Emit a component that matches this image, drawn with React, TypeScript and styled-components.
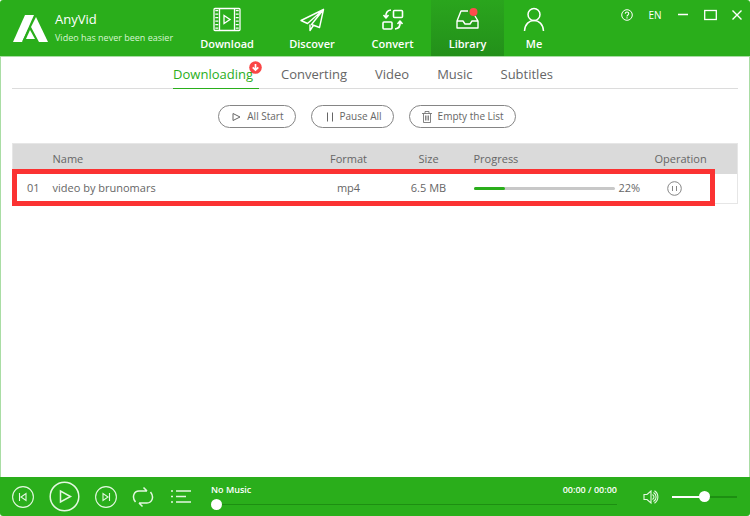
import React, { useState } from "react";
import styled, { createGlobalStyle, css } from "styled-components";

const GREEN = "#2aae1b";

const GlobalStyle = createGlobalStyle`
  *, *::before, *::after { box-sizing: border-box; }
  body { margin: 0; background: #fff; font-family: "Open Sans", "Noto Sans", sans-serif; color: #666; }
  button, input { font: inherit; color: inherit; }
  button { padding: 0; border: 0; background: none; cursor: pointer; }
  svg { display: block; flex: none; fill: none; stroke: currentColor; }
`;

const Window = styled.div`
  display: flex;
  flex-direction: column;
  min-height: 100vh;
  background: #fff;
  border-radius: 3px;
  overflow: hidden;
`;

const Header = styled.header`
  display: flex;
  height: 56px;
  background: ${GREEN};
  color: #fff;
`;

const Brand = styled.div`
  display: flex;
  align-items: flex-start;
  gap: 7px;
  width: 184px;
  padding: 9px 0 0 13px;
  white-space: nowrap;
`;

const BrandLogo = styled.svg`
  margin-top: 6px;
`;

const BrandName = styled.div`
  font-size: 13px;
  line-height: 20px;
`;

const Tagline = styled.div`
  font-size: 9px;
  line-height: 18px;
  color: #d8f5d4;
`;

const Nav = styled.nav`
  display: flex;
`;

const NavItem = styled.button<{ $width: number; $active?: boolean }>`
  display: flex;
  flex-direction: column;
  align-items: center;
  gap: 2px;
  width: ${(p) => p.$width}px;
  padding-top: 6px;
  font-size: 11px;
  font-weight: 600;
  line-height: 16px;
  ${(p) =>
    p.$active &&
    css`
      background: linear-gradient(#2aa51d, #23901a);
    `}
`;

const WindowTools = styled.div`
  display: flex;
  align-items: center;
  height: 30px;
  margin-left: auto;
  font-size: 10px;
`;

const ToolButton = styled.button<{ $width: number }>`
  display: flex;
  align-items: center;
  justify-content: center;
  width: ${(p) => p.$width}px;
  height: 30px;
`;

const Content = styled.main`
  flex: 1;
  padding: 0 11px;
  border: solid #a9dda4;
  border-width: 1px 1px 0;
`;

const Tabs = styled.nav`
  display: flex;
  justify-content: center;
  gap: 28px;
  height: 32px;
  padding-right: 24px;
  border-bottom: 1px solid #dcdcdc;
`;

const Tab = styled.button<{ $active?: boolean }>`
  position: relative;
  height: 32px;
  padding-top: 2px;
  font-size: 13px;
  line-height: 30px;
  ${(p) =>
    p.$active &&
    css`
      margin-right: -6px;
      padding-right: 6px;
      color: ${GREEN};
      box-shadow: inset 0 -1px ${GREEN};
    `}
`;

const TabBadge = styled.svg`
  position: absolute;
  top: 4px;
  right: -3px;
`;

const Actions = styled.div`
  display: flex;
  justify-content: center;
  gap: 15px;
  padding: 16px 16px 15px 0;
`;

const ActionButton = styled.button`
  display: flex;
  align-items: center;
  gap: 5px;
  height: 23px;
  padding: 0 11px;
  border: 1px solid #858585;
  border-radius: 12px;
  font-size: 10px;
  line-height: 21px;
`;

const ListArea = styled.div`
  position: relative;
`;

const Highlight = styled.div`
  position: absolute;
  top: 26px;
  bottom: -2px;
  left: 0;
  right: 23px;
  border: 5px solid #fb3232;
  pointer-events: none;
`;

const Table = styled.table`
  width: 100%;
  table-layout: fixed;
  border-collapse: collapse;
  font-size: 11px;
  border: 1px solid #e6e6e6;
`;

const Col = styled.col<{ $width?: number }>`
  width: ${(p) => (p.$width ? `${p.$width}px` : "auto")};
`;

const cell = css<{ $center?: boolean; $pad?: number }>`
  height: 30px;
  padding: 0 0 0 ${(p) => p.$pad ?? 0}px;
  text-align: ${(p) => (p.$center ? "center" : "left")};
  font-weight: 400;
  line-height: 16px;
  white-space: nowrap;
`;

const HeadCell = styled.th`
  ${cell}
  background: #dadada;
`;

const Cell = styled.td`
  ${cell}
`;

const RowButton = styled.button`
  display: block;
  color: #858585;
`;

const ProgressRow = styled.div`
  display: flex;
  align-items: center;
  gap: 4px;
`;

const ProgressTrack = styled.div`
  width: 141px;
  height: 3px;
  border-radius: 2px;
  background: #c8c8c8;
`;

const ProgressFill = styled.div`
  height: 3px;
  border-radius: 2px;
  background: ${GREEN};
`;

const Player = styled.footer`
  display: flex;
  align-items: center;
  height: 39px;
  padding: 0 13px 0 12px;
  background: ${GREEN};
  color: #e4f8e1;
`;

const Controls = styled.div`
  display: flex;
  align-items: center;
  gap: 15px;
`;

const ListButton = styled.button`
  margin-left: 2px;
`;

const Track = styled.div`
  flex: 1;
  margin: 0 26px 0 20px;
  color: #fff;
`;

const TrackInfo = styled.div`
  display: flex;
  justify-content: space-between;
  font-size: 9px;
  font-weight: 600;
  line-height: 16px;
`;

const thumb = css`
  appearance: none;
  width: 11px;
  height: 11px;
  border: 0;
  border-radius: 50%;
  background: #fff;
`;

const Slider = styled.input<{ $fill: number }>`
  display: block;
  width: 100%;
  height: 13px;
  margin: 0;
  appearance: none;
  background: linear-gradient(to right, #fff ${(p) => p.$fill}%, #1d8f12 ${(p) => p.$fill}%) center / 100% 1px no-repeat;
  &::-webkit-slider-thumb { ${thumb} }
  &::-moz-range-thumb { ${thumb} }
`;

const Volume = styled.div`
  display: flex;
  align-items: center;
  gap: 13px;
`;

const VolumeSlider = styled(Slider)`
  width: 65px;
  background-size: 100% 2px;
`;

const Logo = () => (
  <BrandLogo width="35" height="27" viewBox="0 0 35 27">
    <path d="M12 0h9L9 27H0z" fill="#fff" stroke="none" />
    <path d="M23 2l12 25h-9L18 12z" fill="#fff" stroke="none" />
    <path d="M17 15l5 9h-9z" fill="#fff" stroke="none" />
    <path d="M22 1L10 26" stroke={GREEN} />
  </BrandLogo>
);

const FilmIcon = () => (
  <svg width="28" height="28" viewBox="0 0 28 28" strokeWidth="1.3">
    <rect x="1" y="2.5" width="26" height="22" rx="1" />
    <path d="M6.5 2.5v22M21.5 2.5v22M11 9.5v8l6-4z" />
    <path d="M3.8 4v20M24.2 4v20" strokeWidth="3" strokeDasharray="1.3 2.2" />
  </svg>
);

const PlaneIcon = () => (
  <svg width="28" height="28" viewBox="0 0 28 28" strokeWidth="1.4" strokeLinejoin="round" strokeLinecap="round">
    <path d="M25.500 3.500L3 14.500l6.500 3L25.500 3.500l-4 18-8-3L25.500 3.500zM12 19v5.500l3-4.500" />
  </svg>
);

const ConvertIcon = () => (
  <svg width="28" height="28" viewBox="0 0 28 28" strokeWidth="1.6" strokeLinejoin="round">
    <rect x="14.5" y="4.5" width="9" height="7" rx="1" />
    <rect x="4" y="16" width="9" height="7" rx="1" />
    <path d="M12 4c-4 .5-5.500 3-5 7M4.500 9L7 12l2.500-3M16 23c4-.500 5.500-3 5-7M18.500 18l2.500-3 2.500 3" />
  </svg>
);

const LibraryIcon = () => (
  <svg width="28" height="28" viewBox="0 0 28 28" strokeWidth="1.4" strokeLinejoin="round">
    <path d="M14 5H7L3 15v7h21v-7l-3-5M3 15h6l2 3h5l2-3h6" />
    <circle cx="19.500" cy="6" r="4" fill="#ff4c4c" stroke="none" />
  </svg>
);

const PersonIcon = () => (
  <svg width="28" height="28" viewBox="0 0 28 28" strokeWidth="1.500">
    <circle cx="14" cy="8.500" r="6" />
    <path d="M4.500 25c.500-14 18.500-14 19 0" />
  </svg>
);

const SkipIcon = ({ next = false }: { next?: boolean }) => (
  <svg width="22" height="22" viewBox="0 0 22 22" strokeWidth="1.100">
    <circle cx="11" cy="11" r="10.400" />
    <path d={next ? "M8 7.500v7l5-3.500zM14.500 7v8" : "M14 7.500v7L9 11zM7.500 7v8"} />
  </svg>
);

const navItems = [
  { label: "Download", width: 86, Icon: FilmIcon },
  { label: "Discover", width: 84, Icon: PlaneIcon },
  { label: "Convert", width: 77, Icon: ConvertIcon },
  { label: "Library", width: 73, Icon: LibraryIcon },
  { label: "Me", width: 60, Icon: PersonIcon },
];

const downloads = [{ id: "01", name: "video by brunomars", format: "mp4", size: "6.5 MB", progress: 22 }];

export default function App() {
  const [position, setPosition] = useState(0);
  const [volume, setVolume] = useState(50);

  return (
    <>
      <GlobalStyle />
      <Window>
        <Header>
          <Brand>
            <Logo />
            <div>
              <BrandName>AnyVid</BrandName>
              <Tagline>Video has never been easier</Tagline>
            </div>
          </Brand>
          <Nav>
            {navItems.map(({ label, width, Icon }) => (
              <NavItem key={label} $width={width} $active={label === "Library"}>
                <Icon />
                {label}
              </NavItem>
            ))}
          </Nav>
          <WindowTools>
            <ToolButton $width={28} aria-label="Help">
              <svg width="12" height="12" viewBox="0 0 12 12">
                <circle cx="6" cy="6" r="5.300" strokeWidth="1" />
                <path d="M4.300 4.700c0-2.300 3.500-2.200 3.400 0C7.700 6 6 5.900 6 7.400M6 8.300v1.200" strokeWidth="1.100" />
              </svg>
            </ToolButton>
            <ToolButton $width={28}>EN</ToolButton>
            <ToolButton $width={28} aria-label="Minimize">
              <svg width="10" height="12" viewBox="0 0 10 12"><path d="M0 5.500h10" strokeWidth="1.500" /></svg>
            </ToolButton>
            <ToolButton $width={27} aria-label="Maximize">
              <svg width="13" height="12" viewBox="0 0 13 12"><rect x=".7" y="1.500" width="11.600" height="9" strokeWidth="1.300" /></svg>
            </ToolButton>
            <ToolButton $width={26} aria-label="Close">
              <svg width="10" height="10" viewBox="0 0 10 10"><path d="M.5.5l9 9M9.500.5l-9 9" strokeWidth="1.400" /></svg>
            </ToolButton>
          </WindowTools>
        </Header>

        <Content>
          <Tabs>
            <Tab $active>
              Downloading
              <TabBadge width="13" height="13" viewBox="0 0 13 13">
                <circle cx="6.500" cy="6.500" r="6.300" fill="#fa4646" stroke="none" />
                <path d="M6.500 3v6M3.700 6.300l2.800 2.800 2.800-2.800" stroke="#fff" strokeWidth="1.700" />
              </TabBadge>
            </Tab>
            <Tab>Converting</Tab>
            <Tab>Video</Tab>
            <Tab>Music</Tab>
            <Tab>Subtitles</Tab>
          </Tabs>

          <Actions>
            <ActionButton>
              <svg width="12" height="12" viewBox="0 0 12 12"><path d="M3 2.500v7L10 6z" /></svg>
              All Start
            </ActionButton>
            <ActionButton>
              <svg width="12" height="12" viewBox="0 0 12 12"><path d="M4.500 1.500v9M9.500 1.500v9" /></svg>
              Pause All
            </ActionButton>
            <ActionButton>
              <svg width="12" height="12" viewBox="0 0 12 12">
                <path d="M1 2.500h10M4 2.500v-2h4v2M2.500 2.500v9h7v-9M4.500 4.500v5M6 4.500v5M7.500 4.500v5" strokeWidth=".8" />
              </svg>
              Empty the List
            </ActionButton>
          </Actions>

          <ListArea>
            <Table>
              <colgroup>
                <Col $width={40} />
                <Col />
                <Col $width={80} />
                <Col $width={80} />
                <Col $width={178} />
                <Col $width={91} />
              </colgroup>
              <thead>
                <tr>
                  <HeadCell aria-label="Number" />
                  <HeadCell>Name</HeadCell>
                  <HeadCell $center>Format</HeadCell>
                  <HeadCell $center>Size</HeadCell>
                  <HeadCell $pad={5}>Progress</HeadCell>
                  <HeadCell $pad={8}>Operation</HeadCell>
                </tr>
              </thead>
              <tbody>
                {downloads.map((d) => (
                  <tr key={d.id}>
                    <Cell $pad={14}>{d.id}</Cell>
                    <Cell>{d.name}</Cell>
                    <Cell $center>{d.format}</Cell>
                    <Cell $center>{d.size}</Cell>
                    <Cell $pad={5}>
                      <ProgressRow>
                        <ProgressTrack role="progressbar" aria-label={d.name} aria-valuenow={d.progress}>
                          <ProgressFill style={{ width: `${d.progress}%` }} />
                        </ProgressTrack>
                        {d.progress}%
                      </ProgressRow>
                    </Cell>
                    <Cell $pad={20}>
                      <RowButton aria-label="Pause">
                        <svg width="15" height="15" viewBox="0 0 15 15" strokeWidth="1">
                          <circle cx="7.500" cy="7.500" r="6.800" />
                          <path d="M5.500 5v5M9.500 5v5" />
                        </svg>
                      </RowButton>
                    </Cell>
                  </tr>
                ))}
              </tbody>
            </Table>
            <Highlight />
          </ListArea>
        </Content>

        <Player>
          <Controls>
            <button aria-label="Previous"><SkipIcon /></button>
            <button aria-label="Play">
              <svg width="31" height="31" viewBox="0 0 31 31" strokeWidth="1.500">
                <circle cx="15.500" cy="15.500" r="14.300" />
                <path d="M11.500 10v11l10-5.500z" />
              </svg>
            </button>
            <button aria-label="Next"><SkipIcon next /></button>
            <button aria-label="Repeat">
              <svg width="22" height="22" viewBox="0 0 22 22" strokeWidth="1.500">
                <path d="M3.500 16C-.5 11 2 5 7 5h8M11.500 1.500L15 5M18.500 6c4 5 1.500 11-3.500 11H7M10.500 20.500L7 17" />
              </svg>
            </button>
            <ListButton aria-label="Playlist">
              <svg width="20" height="15" viewBox="0 0 20 15" strokeWidth="1.500">
                <path d="M5 2h15M5 7.500h10M5 13h15M0 2h2M0 7.500h2M0 13h2" />
              </svg>
            </ListButton>
          </Controls>
          <Track>
            <TrackInfo>
              <span>No Music</span>
              <span>00:00 / 00:00</span>
            </TrackInfo>
            <Slider type="range" aria-label="Position" $fill={0} value={position} onChange={(e) => setPosition(+e.target.value)} />
          </Track>
          <Volume>
            <svg width="16" height="14" viewBox="0 0 16 14" strokeWidth="1.100">
              <path d="M1 4.500h3L8 1v12L4 9.500H1zM9.500 4.500c2 1.500 2 3.500 0 5M10.500 2.500c3.500 2 3.500 7 0 9M11.500.8c4.500 3 4.500 9.400 0 12.400" />
            </svg>
            <VolumeSlider type="range" aria-label="Volume" $fill={volume} value={volume} onChange={(e) => setVolume(+e.target.value)} />
          </Volume>
        </Player>
      </Window>
    </>
  );
}
